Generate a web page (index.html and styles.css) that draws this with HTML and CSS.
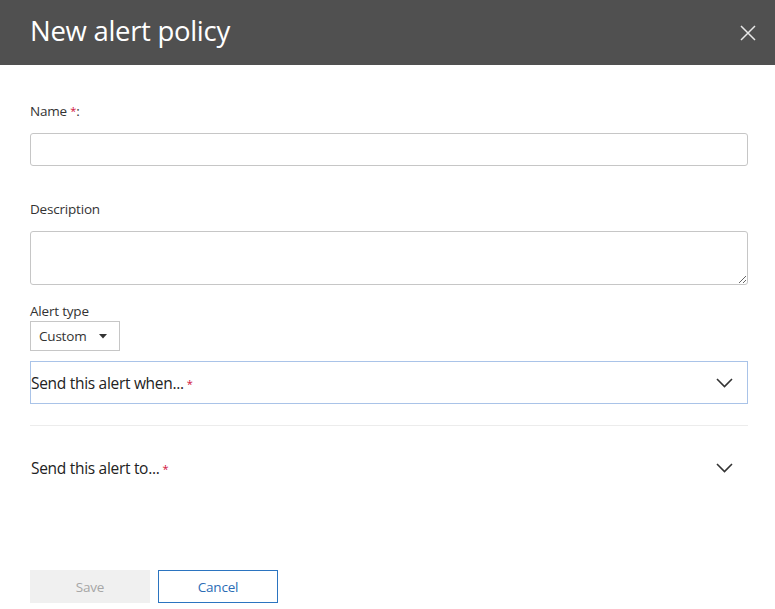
FILE: index.html
```html
<!DOCTYPE html>
<html>
<head>
<meta charset="utf-8">
<link rel="stylesheet" href="styles.css">
</head>
<body>
<div class="panel">
  <header class="header">
    <h1 class="title">New alert policy</h1>
    <button class="close" aria-label="Close">
      <svg width="16" height="16" viewBox="0 0 16 16"><path d="M1 1L15 15M15 1L1 15" stroke="#e8e8e8" stroke-width="1.5" fill="none"/></svg>
    </button>
  </header>
  <main class="body">
    <label class="label name-label">Name <span class="req small">*</span>:</label>
    <input class="input" type="text">
    <label class="label desc-label">Description</label>
    <textarea class="textarea"></textarea>
    <label class="label type-label">Alert type</label>
    <div class="dropdown">
      <span>Custom</span>
      <svg width="8" height="5" viewBox="0 0 8 5"><path d="M0 0H8L4 4.5Z" fill="#333"/></svg>
    </div>
    <div class="section section-active">
      <span class="section-title">Send this alert when...<span class="req small gap">*</span></span>
      <svg class="chev" width="17" height="10" viewBox="0 0 17 10"><path d="M1 1L8.5 8.5L16 1" stroke="#333" stroke-width="1.6" fill="none"/></svg>
    </div>
    <div class="divider"></div>
    <div class="section section-plain">
      <span class="section-title">Send this alert to...<span class="req small gap">*</span></span>
      <svg class="chev" width="17" height="10" viewBox="0 0 17 10"><path d="M1 1L8.5 8.5L16 1" stroke="#333" stroke-width="1.6" fill="none"/></svg>
    </div>
    <div class="actions">
      <button class="btn btn-save" disabled>Save</button>
      <button class="btn btn-cancel">Cancel</button>
    </div>
  </main>
</div>
</body>
</html>
```
FILE: styles.css
```css
* { box-sizing: border-box; }
html, body { margin: 0; padding: 0; background: #fff; }
body { font-family: "Open Sans", "Noto Sans", sans-serif; color: #333; width: 775px; height: 609px; overflow: hidden; }
.panel { display: flex; flex-direction: column; }
.header { height: 65px; background: #505050; display: flex; align-items: center; justify-content: space-between; padding: 0 20px 0 30px; }
.title { margin: 0; font-weight: 400; font-size: 27.5px; color: #fff; letter-spacing: -0.3px; position: relative; top: -2px; }
.close { background: none; border: 0; padding: 0; width: 16px; height: 16px; display: flex; position: relative; left: 1px; }
.body { padding: 0 27px 0 30px; display: flex; flex-direction: column; }
.label { font-size: 13.5px; color: #333; line-height: 18px; height: 18px; letter-spacing: -0.2px; }
.name-label { margin-top: 37px; }
.req { color: #d0103a; }
.input { margin-top: 13px; height: 33px; border: 1px solid #c6c6c6; border-radius: 3px; width: 718px; }
.desc-label { margin-top: 34px; }
.textarea { margin-top: 13px; height: 54px; border: 1px solid #c6c6c6; border-radius: 3px; width: 718px; resize: vertical; font-family: inherit; }
.type-label { margin-top: 17px; }
.dropdown { margin-top: 1px; width: 90px; height: 30px; border: 1px solid #c6c6c6; display: flex; align-items: center; justify-content: space-between; padding: 0 12px 0 8px; font-size: 13.5px; letter-spacing: -0.2px; }
.section { width: 718px; display: flex; align-items: center; justify-content: space-between; }
.section-active { margin-top: 10px; height: 43px; border: 1px solid #a9c3e8; padding: 0 14px 0 0; }
.section-title { font-size: 15.5px; color: #222; letter-spacing: -0.3px; }
.small { font-size: 11px; line-height: 0; position: relative; top: -1px; }
.gap { margin-left: 3px; }
.divider { margin-top: 21px; height: 1px; background: #ececec; width: 718px; }
.section-plain { margin-top: 30px; height: 24px; padding: 0 15px 0 1px; }
.actions { margin-top: 90px; display: flex; gap: 8px; }
.btn { width: 120px; height: 33px; font-family: inherit; font-size: 13.5px; letter-spacing: -0.2px; }
.btn-save { background: #f0f0f0; border: 0; color: #a6a6a6; }
.btn-cancel { background: #fff; border: 1px solid #2b74c0; color: #2b6cb5; }
```
